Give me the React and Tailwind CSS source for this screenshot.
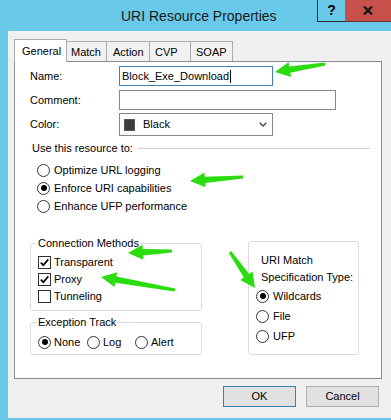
import React from 'react';

const arrowPoints = (x1, y1, x2, y2, headLen = 15, headW = 7.5, tailW = 1.5, neckW = 3.2) => {
  const dx = x2 - x1;
  const dy = y2 - y1;
  const len = Math.hypot(dx, dy);
  const ux = dx / len;
  const uy = dy / len;
  const nx = -uy;
  const ny = ux;
  const bx = x2 - ux * headLen;
  const by = y2 - uy * headLen;
  const pts = [
    [x1 + nx * tailW, y1 + ny * tailW],
    [bx + nx * neckW, by + ny * neckW],
    [bx + nx * headW, by + ny * headW],
    [x2, y2],
    [bx - nx * headW, by - ny * headW],
    [bx - nx * neckW, by - ny * neckW],
    [x1 - nx * tailW, y1 - ny * tailW],
  ];
  return pts.map((p) => p.map((v) => v.toFixed(1)).join(',')).join(' ');
};

const arrows = [
  [325, 64, 275, 72],
  [243, 177, 190, 181],
  [172, 251, 128, 253],
  [175, 290, 101, 277],
  [230, 252, 255, 288],
];

function Radio({ checked = false }) {
  return (
    <span className="flex h-[13px] w-[13px] shrink-0 items-center justify-center rounded-full border border-[#333] bg-white">
      {checked && <span className="h-[6px] w-[6px] rounded-full bg-black" />}
    </span>
  );
}

function Checkbox({ checked = false }) {
  return (
    <span className="flex h-[13px] w-[13px] shrink-0 items-center justify-center border border-[#333] bg-white">
      {checked && (
        <svg width="11" height="11" viewBox="0 0 11 11">
          <path d="M1.8 5.6 L4.3 8.2 L9.3 2.4" fill="none" stroke="#000" strokeWidth="1.7" />
        </svg>
      )}
    </span>
  );
}

function Legend({ children }) {
  return (
    <div className="-ml-[1px] -mt-[8px] h-[14px] w-fit bg-white px-[1px] leading-[14px]">{children}</div>
  );
}

export default function App() {
  return (
    <div className="relative h-[420px] w-[391px] overflow-hidden bg-[#69c9e8] font-['Liberation_Sans',Arial,sans-serif] text-[11px] text-black">
      {/* title bar */}
      <div className="flex h-[31px]">
        <span className="ml-[121px] flex items-center pt-[2px] text-[14px] text-[#1a1a1a]">URI Resource Properties</span>
        <div className="ml-auto flex items-start">
          <div className="flex h-[22px] w-[28px] items-center justify-center border-b border-l border-[#2a2a2a] text-[14px] font-bold">?</div>
          <div className="flex h-[22px] w-[46px] items-center justify-center border-b border-[#6a3532] bg-[#c7504b]">
            <svg width="10" height="9" viewBox="0 0 10 9">
              <path d="M1 0.5 L9 8.5 M9 0.5 L1 8.5" stroke="#111" strokeWidth="2.2" />
            </svg>
          </div>
        </div>
      </div>

      {/* body */}
      <div className="ml-[8px] h-[387px] bg-[#f0f0f0] pl-[6px] pt-[8px]">
        <div className="flex h-[22px] items-end">
          <div className="relative z-10 -mb-px h-[23px] w-[53px] border-l border-r border-t border-[#acacac] bg-white pl-[7px] pt-[4px] leading-[14px]">General</div>
          <div className="h-[20px] w-[40px] border-r border-t border-[#acacac] bg-[#f2f2f2] pl-[4px] pt-[3px] leading-[14px]">Match</div>
          <div className="h-[20px] w-[43px] border-r border-t border-[#acacac] bg-[#f2f2f2] pl-[6px] pt-[3px] leading-[14px]">Action</div>
          <div className="h-[20px] w-[41px] border-r border-t border-[#acacac] bg-[#f2f2f2] pl-[5px] pt-[3px] leading-[14px]">CVP</div>
          <div className="h-[20px] w-[42px] border-r border-t border-[#acacac] bg-[#f2f2f2] pl-[5px] pt-[3px] leading-[14px]">SOAP</div>
        </div>

        <div className="h-[318px] w-[368px] border border-[#898c95] bg-white">
          <div className="pl-[15px] pt-[4px]">
            <div className="flex h-[20px] items-center">
              <span className="w-[89px]">Name:</span>
              <div className="flex h-[20px] w-[154px] items-center border border-[#3c7fb1] pl-[2px]">
                <span>Block_Exe_Download</span>
                <span className="ml-[1px] h-[13px] w-px bg-black" />
              </div>
            </div>
            <div className="mt-[4px] flex h-[20px] items-center">
              <span className="w-[89px]">Comment:</span>
              <div className="h-[20px] w-[217px] border border-[#828790]" />
            </div>
            <div className="mt-[3px] flex h-[23px] items-center">
              <span className="w-[89px]">Color:</span>
              <div className="flex h-[23px] w-[154px] items-center border border-[#828790] pl-[4px]">
                <span className="h-[12px] w-[11px] border border-[#555] bg-[#3d3d3d]" />
                <span className="ml-[8px]">Black</span>
                <svg className="ml-auto mr-[5px]" width="8" height="5" viewBox="0 0 8 5">
                  <path d="M0.7 0.7 L4 4 L7.3 0.7" fill="none" stroke="#444" strokeWidth="1.4" />
                </svg>
              </div>
            </div>
          </div>

          <div className="mt-[5px] flex h-[14px] items-center pl-[17px] pr-[11px]">
            <span>Use this resource to:</span>
            <span className="ml-[5px] h-px flex-1 bg-[#d0d0d0]" />
          </div>

          <div className="mt-[6px] pl-[22px]">
            <div className="flex h-[18px] items-center gap-[4px]">
              <Radio />
              <span>Optimize URL logging</span>
            </div>
            <div className="flex h-[18px] items-center gap-[4px]">
              <Radio checked />
              <span>Enforce URI capabilities</span>
            </div>
            <div className="flex h-[18px] items-center gap-[4px]">
              <Radio />
              <span>Enhance UFP performance</span>
            </div>
          </div>

          <div className="mt-[28px] flex items-start pl-[15px]">
            <div className="w-[172px]">
              <div className="h-[68px] rounded-[3px] border border-[#dcdcdc] pl-[7px]">
                <Legend>Connection Methods</Legend>
                <div className="mt-[4px]">
                  <div className="flex h-[17px] items-center gap-[3px]">
                    <Checkbox checked />
                    <span>Transparent</span>
                  </div>
                  <div className="flex h-[17px] items-center gap-[3px]">
                    <Checkbox checked />
                    <span>Proxy</span>
                  </div>
                  <div className="flex h-[17px] items-center gap-[3px]">
                    <Checkbox />
                    <span>Tunneling</span>
                  </div>
                </div>
              </div>

              <div className="mt-[11px] h-[33px] rounded-[3px] border border-[#dcdcdc] pl-[7px]">
                <Legend>Exception Track</Legend>
                <div className="mt-[5px] flex h-[16px] items-center">
                  <div className="flex w-[49px] items-center gap-[3px]">
                    <Radio checked />
                    <span>None</span>
                  </div>
                  <div className="flex w-[48px] items-center gap-[3px]">
                    <Radio />
                    <span>Log</span>
                  </div>
                  <div className="flex items-center gap-[3px]">
                    <Radio />
                    <span>Alert</span>
                  </div>
                </div>
              </div>
            </div>

            <div className="-mt-[2px] ml-[46px] h-[114px] w-[111px] rounded-[3px] border border-[#dcdcdc] pl-[12px] pt-[10px]">
              <div className="leading-[17px]">URI Match</div>
              <div className="leading-[17px]">Specification Type:</div>
              <div className="-ml-[5px]">
                <div className="flex h-[20px] items-center gap-[4px]">
                  <Radio checked />
                  <span>Wildcards</span>
                </div>
                <div className="flex h-[20px] items-center gap-[4px]">
                  <Radio />
                  <span>File</span>
                </div>
                <div className="flex h-[20px] items-center gap-[4px]">
                  <Radio />
                  <span>UFP</span>
                </div>
              </div>
            </div>
          </div>
        </div>

        <div className="mt-[7px] flex w-[368px] justify-end gap-[10px] pr-[3px]">
          <button className="flex h-[21px] w-[73px] items-center justify-center border border-[#3c7fb1] bg-[#e1e1e1]">OK</button>
          <button className="flex h-[21px] w-[73px] items-center justify-center border border-[#adadad] bg-[#e1e1e1]">Cancel</button>
        </div>
      </div>

      <svg className="pointer-events-none absolute left-0 top-0" width="391" height="420">
        {arrows.map(([x1, y1, x2, y2], i) => (
          <polygon key={i} points={arrowPoints(x1, y1, x2, y2)} fill="#2bdc0e" />
        ))}
      </svg>
    </div>
  );
}
